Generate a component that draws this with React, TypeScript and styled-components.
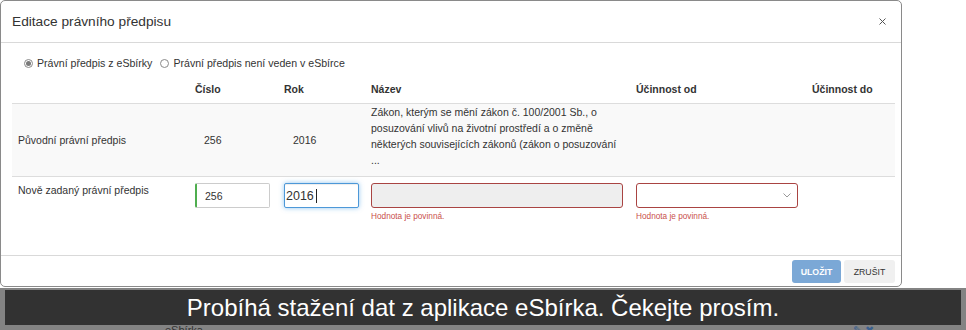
import React from "react";
import styled, { createGlobalStyle } from "styled-components";

const GlobalStyle = createGlobalStyle`
  html, body { margin: 0; padding: 0; background: #fff; }
  body { font-family: "Liberation Sans", Arial, sans-serif; color: #333; }
  * { box-sizing: border-box; }
`;

const Screen = styled.div`
  width: 966px;
  height: 330px;
  overflow: hidden;
  display: flex;
  flex-direction: column;
  background: #fff;
`;

const Stage = styled.div`
  height: 288px;
  flex: none;
  display: flex;
  align-items: flex-start;
`;

const Modal = styled.div`
  width: 902px;
  height: 287px;
  border: 1px solid #8a8a8a;
  border-radius: 5px;
  background: #fff;
  display: flex;
  flex-direction: column;
  overflow: hidden;
`;

const Header = styled.div`
  height: 42px;
  flex: none;
  display: flex;
  align-items: center;
  justify-content: space-between;
  padding: 0 14px 0 11px;
  border-bottom: 1px solid #d9d9d9;
`;

const Title = styled.h4`
  margin: 0;
  font-size: 13.7px;
  font-weight: normal;
  color: #333;
`;

const Close = styled.button`
  border: 0;
  background: none;
  padding: 0;
  width: 10px;
  height: 10px;
  display: flex;
  align-items: center;
  justify-content: center;
`;

const Body = styled.div`
  flex: 1;
  padding: 13px 6px 0 11px;
`;

const RadioRow = styled.div`
  display: flex;
  align-items: center;
  height: 15px;
  margin: 0 0 5px 12px;
  font-size: 10.6px;
  gap: 8px;
`;

const RadioLabel = styled.label`
  display: flex;
  align-items: center;
  gap: 4px;
  line-height: 15px;
`;

const RadioDot = styled.span<{ $checked?: boolean }>`
  width: 9px;
  height: 9px;
  border-radius: 50%;
  border: 1px solid #8a8a8a;
  background: #fff;
  display: inline-flex;
  align-items: center;
  justify-content: center;
  &::after {
    content: "";
    width: 5px;
    height: 5px;
    border-radius: 50%;
    background: ${(p) => (p.$checked ? "#7a7a7a" : "transparent")};
  }
`;

const Table = styled.table`
  width: 883px;
  border-collapse: collapse;
  table-layout: fixed;
  font-size: 10.5px;
`;

const Th = styled.th`
  text-align: left;
  font-weight: bold;
  padding: 6px;
  line-height: 15px;
  border-bottom: 1px solid #ddd;
`;

const Tr = styled.tr<{ $striped?: boolean }>`
  background: ${(p) => (p.$striped ? "#f9f9f9" : "#fff")};
  border-bottom: ${(p) => (p.$striped ? "1px solid #ddd" : "none")};
`;

const Td = styled.td<{ $top?: boolean }>`
  padding: 6px;
  line-height: 15px;
  vertical-align: ${(p) => (p.$top ? "top" : "middle")};
`;

const NameCell = styled.td`
  padding: 0 6px 8px 6px;
  line-height: 16px;
  vertical-align: top;
`;

const StaticValue = styled.span`
  padding-left: 9px;
`;

const Input = styled.input<{ $w: number; $state?: "success" | "focus" | "error" }>`
  display: block;
  width: ${(p) => p.$w}px;
  height: 25px;
  padding: 0 9px;
  font-family: "Liberation Sans", Arial, sans-serif;
  font-size: 10.5px;
  color: #333;
  background: #fff;
  border: 1px solid #ccc;
  border-radius: 2px;
  outline: none;
  ${(p) =>
    p.$state === "success"
      ? "border-left: 2px solid #4fae4f; padding-left: 8px;"
      : ""}
  ${(p) =>
    p.$state === "focus"
      ? "border-color: #4d98d8; box-shadow: inset 0 1px 1px rgba(0,0,0,.075), 0 0 5px rgba(102,175,233,.7); font-size: 12.5px; padding-left: 1px;"
      : ""}
  ${(p) =>
    p.$state === "error"
      ? "border-color: #a94442; background: #eee; border-radius: 3px;"
      : ""}
`;

const CaretWrap = styled.div`
  position: relative;
  width: 75px;
`;

const Caret = styled.span`
  position: absolute;
  left: 32px;
  top: 6px;
  width: 1px;
  height: 14px;
  background: #222;
`;

const Select = styled.div<{ $w: number }>`
  width: ${(p) => p.$w}px;
  height: 25px;
  border: 1px solid #a94442;
  border-radius: 3px;
  background: #fff;
  display: flex;
  align-items: center;
  justify-content: flex-end;
  padding-right: 6px;
`;

const ErrorText = styled.div`
  margin-top: 3px;
  font-size: 8.25px;
  line-height: 12px;
  color: #c9504c;
`;

const Footer = styled.div`
  height: 31px;
  flex: none;
  border-top: 1px solid #d9d9d9;
  display: flex;
  justify-content: flex-end;
  align-items: flex-start;
  gap: 3px;
  padding: 4px 6px 0 0;
`;

const Button = styled.button<{ $primary?: boolean }>`
  height: 23px;
  padding: 0;
  width: ${(p) => (p.$primary ? 49 : 51)}px;
  border: 0;
  border-radius: 3px;
  font-family: "Liberation Sans", Arial, sans-serif;
  font-size: 8.75px;
  font-weight: ${(p) => (p.$primary ? "bold" : "normal")};
  color: ${(p) => (p.$primary ? "#fff" : "#333")};
  background: ${(p) => (p.$primary ? "#7ba8d6" : "#f0f0f0")};
`;

const BottomStrip = styled.div`
  flex: 1;
  background: #838383;
  padding: 2px 5px 0 5px;
  display: flex;
  flex-direction: column;
`;

const Bar = styled.div`
  width: 956px;
  height: 35px;
  flex: none;
  background: #323232;
  color: #fff;
  font-size: 24px;
  line-height: 35px;
  text-align: center;
`;

const UnderBar = styled.div`
  display: flex;
  align-items: flex-start;
  height: 10px;
  font-size: 11px;
  line-height: 11px;
  color: #333;
  padding-left: 160px;
  gap: 650px;
`;

const Icons = styled.span`
  color: #3a5f8f;
  font-size: 11px;
  letter-spacing: 3px;
`;

export default function App() {
  return (
    <>
      <GlobalStyle />
      <Screen>
        <Stage>
          <Modal>
            <Header>
              <Title>Editace právního předpisu</Title>
              <Close aria-label="Zavřít">
                <svg width="7" height="7" viewBox="0 0 7 7">
                  <path d="M0.5 0.5 L6.5 6.5 M6.5 0.5 L0.5 6.5" stroke="#555" strokeWidth="1" />
                </svg>
              </Close>
            </Header>
            <Body>
              <RadioRow>
                <RadioLabel>
                  <RadioDot $checked />
                  Právní předpis z eSbírky
                </RadioLabel>
                <RadioLabel>
                  <RadioDot />
                  Právní předpis není veden v eSbírce
                </RadioLabel>
              </RadioRow>
              <Table>
                <colgroup>
                  <col style={{ width: 177 }} />
                  <col style={{ width: 89 }} />
                  <col style={{ width: 87 }} />
                  <col style={{ width: 265 }} />
                  <col style={{ width: 176 }} />
                  <col style={{ width: 89 }} />
                </colgroup>
                <thead>
                  <tr>
                    <Th></Th>
                    <Th>Číslo</Th>
                    <Th>Rok</Th>
                    <Th>Název</Th>
                    <Th>Účinnost od</Th>
                    <Th>Účinnost do</Th>
                  </tr>
                </thead>
                <tbody>
                  <Tr $striped>
                    <Td>Původní právní předpis</Td>
                    <Td>
                      <StaticValue>256</StaticValue>
                    </Td>
                    <Td>
                      <StaticValue>2016</StaticValue>
                    </Td>
                    <NameCell>
                      Zákon, kterým se mění zákon č. 100/2001 Sb., o posuzování vlivů na životní prostředí a o změně některých souvisejících zákonů (zákon o posuzování ...
                    </NameCell>
                    <Td></Td>
                    <Td></Td>
                  </Tr>
                  <Tr>
                    <Td $top>Nově zadaný právní předpis</Td>
                    <Td $top>
                      <Input $w={75} $state="success" defaultValue="256" />
                    </Td>
                    <Td $top>
                      <CaretWrap>
                        <Input $w={75} $state="focus" defaultValue="2016" />
                        <Caret />
                      </CaretWrap>
                    </Td>
                    <Td $top>
                      <Input $w={252} $state="error" disabled />
                      <ErrorText>Hodnota je povinná.</ErrorText>
                    </Td>
                    <Td $top>
                      <Select $w={162}>
                        <svg width="8" height="5" viewBox="0 0 8 5">
                          <path d="M0.5 0.5 L4 4 L7.5 0.5" fill="none" stroke="#999" strokeWidth="1" />
                        </svg>
                      </Select>
                      <ErrorText>Hodnota je povinná.</ErrorText>
                    </Td>
                    <Td $top></Td>
                  </Tr>
                </tbody>
              </Table>
            </Body>
            <Footer>
              <Button $primary>ULOŽIT</Button>
              <Button>ZRUŠIT</Button>
            </Footer>
          </Modal>
        </Stage>
        <BottomStrip>
          <Bar>Probíhá stažení dat z aplikace eSbírka. Čekejte prosím.</Bar>
          <UnderBar>
            <span>eSbírka</span>
            <Icons>✎✖</Icons>
          </UnderBar>
        </BottomStrip>
      </Screen>
    </>
  );
}
